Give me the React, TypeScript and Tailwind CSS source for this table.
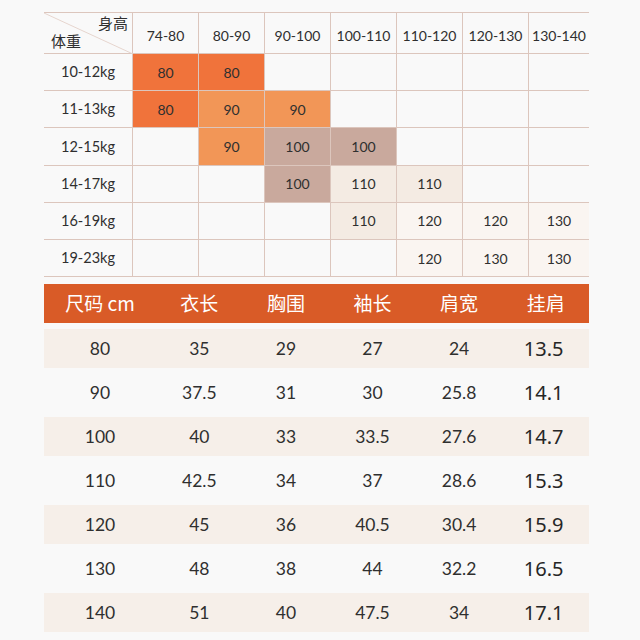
const heights = ["74-80", "80-90", "90-100", "100-110", "110-120", "120-130", "130-140"];

type Cell = [string, string] | null;

// colour keys for the recommend grid
const tone: Record<string, string> = {
  o: "bg-[#f0733b]",
  l: "bg-[#f29657]",
  t: "bg-[#c9a99d]",
  b: "bg-[#f4ebe3]",
  p: "bg-[#faf5f1]",
};

const weights: { label: string; cells: Cell[] }[] = [
  { label: "10-12kg", cells: [["80", "o"], ["80", "o"], null, null, null, null, null] },
  { label: "11-13kg", cells: [["80", "o"], ["90", "l"], ["90", "l"], null, null, null, null] },
  { label: "12-15kg", cells: [null, ["90", "l"], ["100", "t"], ["100", "t"], null, null, null] },
  { label: "14-17kg", cells: [null, null, ["100", "t"], ["110", "b"], ["110", "b"], null, null] },
  { label: "16-19kg", cells: [null, null, null, ["110", "b"], ["120", "p"], ["120", "p"], ["130", "p"]] },
  { label: "19-23kg", cells: [null, null, null, null, ["120", "p"], ["130", "p"], ["130", "p"]] },
];

const columns = ["尺码 cm", "衣长", "胸围", "袖长", "肩宽", "挂肩"];

const sizes = [
  ["80", "35", "29", "27", "24", "13.5"],
  ["90", "37.5", "31", "30", "25.8", "14.1"],
  ["100", "40", "33", "33.5", "27.6", "14.7"],
  ["110", "42.5", "34", "37", "28.6", "15.3"],
  ["120", "45", "36", "40.5", "30.4", "15.9"],
  ["130", "48", "38", "44", "32.2", "16.5"],
  ["140", "51", "40", "47.5", "34", "17.1"],
];

const gill = { fontFamily: "Lato, 'Noto Sans CJK SC', sans-serif" };

function RecommendTable() {
  return (
    <div
      className="grid grid-cols-[89px_repeat(6,66px)_60px] border-t border-[#dcc6bd] text-[#2f2f2f]"
      style={gill}
    >
      <div className="relative h-[41px] border-r border-b border-[#dcc6bd]">
        <svg className="absolute inset-0" width="89" height="41" viewBox="0 0 89 41">
          <line x1="0" y1="0" x2="89" y2="41" stroke="#e6d5ce" strokeWidth="1" />
        </svg>
        <span className="absolute right-[4px] top-[3px] text-[15px] leading-none">身高</span>
        <span className="absolute left-[7px] bottom-[4px] text-[15px] leading-none">体重</span>
      </div>
      {heights.map((h, i) => (
        <div
          key={h}
          className={`flex h-[41px] items-center justify-center pt-1 text-[14px] border-b border-[#dcc6bd] ${
            i < heights.length - 1 ? "border-r" : ""
          }`}
        >
          {h}
        </div>
      ))}
      {weights.map((w) => (
        <div key={w.label} className="contents">
          <div className="flex h-[37.2px] items-center justify-center border-r border-b border-[#dcc6bd] text-[14.5px]">
            {w.label}
          </div>
          {w.cells.map((c, i) => (
            <div
              key={i}
              className={`flex h-[37.2px] items-center justify-center border-b border-[#dcc6bd] text-[14px] ${
                i < 6 ? "border-r" : ""
              } ${c ? tone[c[1]] : ""}`}
            >
              {c ? c[0] : ""}
            </div>
          ))}
        </div>
      ))}
    </div>
  );
}

function SizeTable() {
  return (
    <div className="flex flex-col gap-[5px] text-[#2f2f2f]">
      <div className="mb-px grid h-[39px] grid-cols-[112px_repeat(5,1fr)] items-center bg-[#d95b27] text-white">
        {columns.map((c) => (
          <div
            key={c}
            className="text-center text-[19px]"
            style={{ fontFamily: "'Noto Sans CJK SC', Lato, sans-serif" }}
          >
            {c}
          </div>
        ))}
      </div>
      {sizes.map((row, r) => (
        <div
          key={row[0]}
          className={`grid h-[39px] grid-cols-[112px_repeat(5,1fr)] items-center ${
            r % 2 === 0 ? "bg-[#f6efe9]" : ""
          }`}
        >
          {row.map((v, i) =>
            i === 5 ? (
              <div
                key={i}
                className="pr-1 text-center text-[20px] text-[#262626]"
                style={{ fontFamily: "'Noto Sans', sans-serif" }}
              >
                {v}
              </div>
            ) : (
              <div key={i} className="text-center text-[17.5px]" style={gill}>
                {v}
              </div>
            )
          )}
        </div>
      ))}
    </div>
  );
}

export default function App() {
  return (
    <div className="h-[640px] w-[640px] overflow-hidden bg-[#f9f9f9]">
      <div className="ml-[44px] w-[545px] pt-[12px]">
        <RecommendTable />
        <div className="mt-[7px]">
          <SizeTable />
        </div>
      </div>
    </div>
  );
}
